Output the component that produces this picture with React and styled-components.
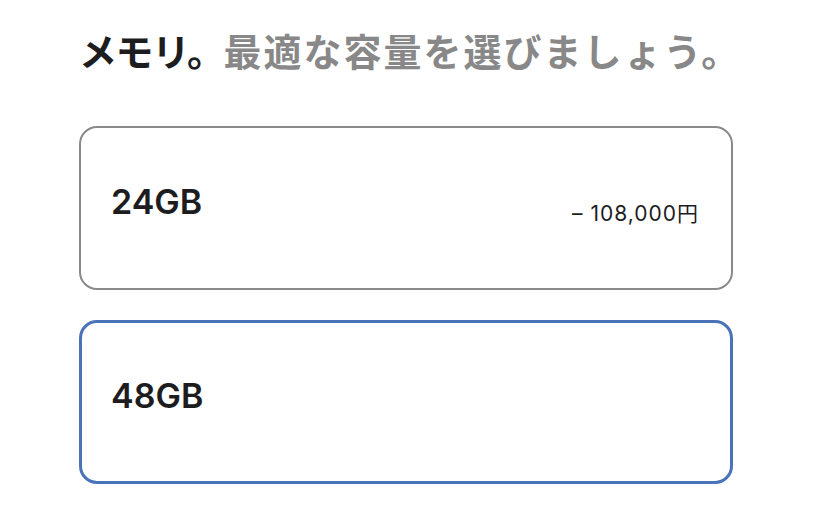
import React from "react";
import styled, { createGlobalStyle } from "styled-components";

const GlobalStyle = createGlobalStyle`
  body {
    margin: 0;
    background: #fff;
    font-family: "Noto Sans CJK JP", "Noto Sans", sans-serif;
  }
`;

const options = [
  { size: "24GB", price: "– 108,000円" },
  { size: "48GB", price: null, selected: true },
];

const Section = styled.section`
  padding: 20px 81px 0 79px;
  display: flex;
  flex-direction: column;
  gap: 30px;
`;

const Heading = styled.h2`
  margin: 0 0 16px 0;
  font-size: 38px;
  font-weight: 700;
  line-height: 60px;
  letter-spacing: 2px;
  color: #888;
  white-space: nowrap;

  strong {
    color: #1d1d1f;
    font-weight: 700;
    letter-spacing: -1.5px;
  }
`;

const Card = styled.div`
  box-sizing: border-box;
  height: 164px;
  border-radius: 18px;
  border: ${(p) => (p.$selected ? "3px solid #4a72b8" : "2px solid #8a8a8a")};
  padding: 0 ${(p) => (p.$selected ? 31 : 32)}px 0 ${(p) => (p.$selected ? 29 : 30)}px;
  display: flex;
  align-items: center;
  justify-content: space-between;
`;

const Size = styled.span`
  font-family: Inter, "Noto Sans", sans-serif;
  font-size: 34px;
  font-weight: 600;
  color: #1d1d1f;
  margin-bottom: 14px;
`;

const Price = styled.span`
  font-family: Inter, "Noto Sans CJK JP", sans-serif;
  font-size: 21px;
  letter-spacing: 1px;
  color: #1d1d1f;
  margin-top: 8px;
`;

export default function App() {
  return (
    <>
      <GlobalStyle />
      <Section>
        <Heading>
          <strong>メモリ。</strong>最適な容量を選びましょう。
        </Heading>
        {options.map((o) => (
          <Card key={o.size} $selected={o.selected}>
            <Size>{o.size}</Size>
            {o.price && <Price>{o.price}</Price>}
          </Card>
        ))}
      </Section>
    </>
  );
}
